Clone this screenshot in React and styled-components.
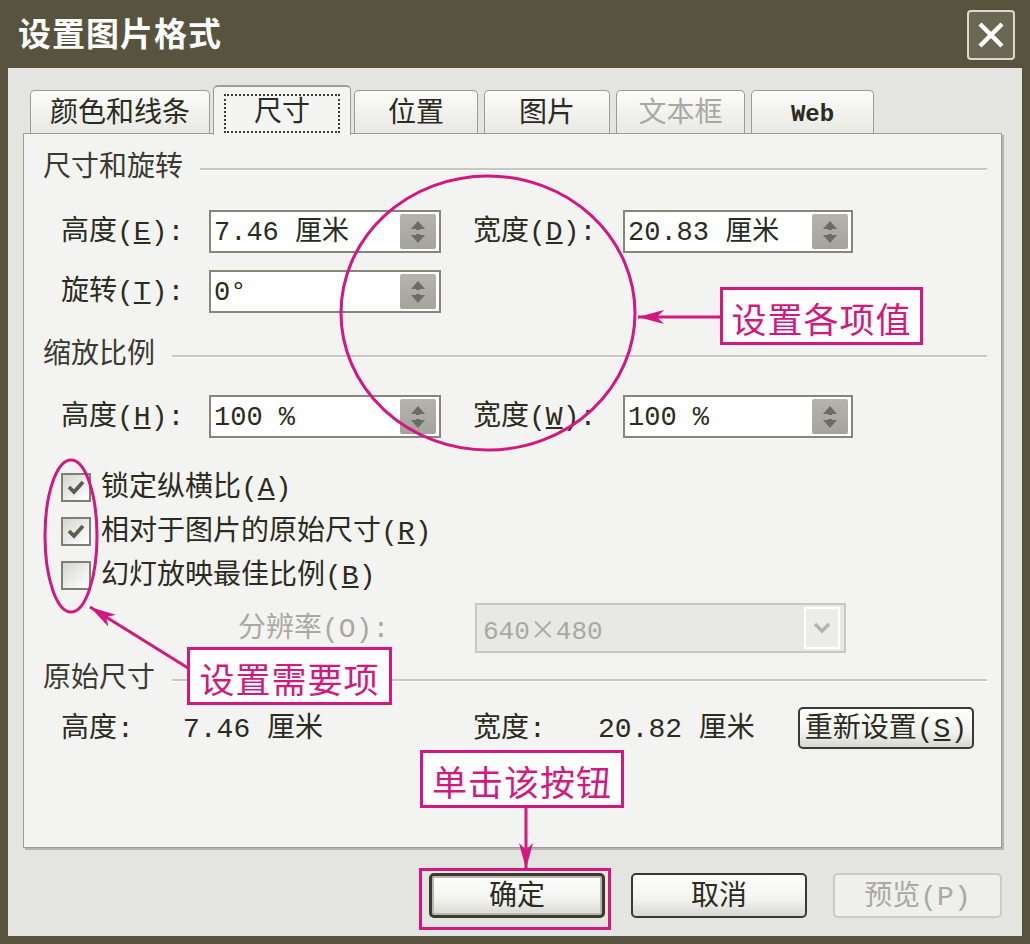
import styled, { createGlobalStyle } from 'styled-components';

const MAGENTA = '#d3187f';
const UI_FONT = `"Liberation Mono", "Noto Sans CJK SC", monospace`;
const CJK_FONT = `"Noto Sans CJK SC", sans-serif`;

const GlobalStyle = createGlobalStyle`
   html, body {
      margin: 0;
      padding: 0;
      background: #57533f;
   }
`;

const Window = styled.div`
   position: relative;
   width: 1030px;
   height: 944px;
   overflow: hidden;
   background: #57533f;
   color: #2b2b22;
   font-family: ${UI_FONT};
`;

const TitleBar = styled.div`
   align-items: center;
   box-sizing: border-box;
   display: flex;
   height: 68px;
   justify-content: space-between;
   padding: 0 15px 0 18px;
`;

const Title = styled.div`
   color: #ffffff;
   font-family: ${CJK_FONT};
   font-size: 33px;
   font-weight: 700;
   letter-spacing: 1px;
   line-height: 1;
   margin-top: -4px;
`;

const CloseButton = styled.div`
   align-items: center;
   background: #6a6755;
   border: 2px solid #d9d9cf;
   border-radius: 4px;
   box-sizing: border-box;
   display: flex;
   height: 50px;
   justify-content: center;
   margin-top: 2px;
   width: 48px;
`;

const Body = styled.div`
   background: #e4e4e0;
   box-sizing: border-box;
   height: 868px;
   margin: 0 8px;
   padding: 17px 0 0 15px;
`;

const TabRow = styled.div`
   align-items: flex-end;
   display: flex;
   gap: 6px;
   height: 48px;
   padding-left: 7px;
   position: relative;
   z-index: 2;
`;

const Tab = styled.div`
   align-items: center;
   background: linear-gradient(#fcfcfa, #e8e8e4);
   border: 1px solid #9c9c94;
   border-bottom: none;
   border-radius: 5px 5px 0 0;
   box-sizing: border-box;
   color: ${p => (p.$disabled ? '#a9a9a1' : '#2b2b22')};
   display: flex;
   font-size: ${p => (p.$latin ? '24px' : '28px')};
   font-weight: ${p => (p.$latin ? 700 : 400)};
   height: 43px;
   justify-content: center;
   line-height: 1;
   padding-top: 5px;
   width: ${p => p.$w}px;
   &[data-active='true'] {
      background: #f4f4f2;
      border-top: 2px solid #a09f96;
      height: 50px;
      margin: 0 -3px -2px;
      padding-top: 4px;
   }
`;

const FocusRect = styled.span`
   border: 2px dotted #3a3a32;
   padding: 4px 28px 3px;
`;

const Panel = styled.div`
   background: #f3f3f1;
   border: 1px solid #9c9c94;
   box-shadow: 2px 2px 0 #b4b4ac;
   box-sizing: border-box;
   height: 715px;
   padding: 17px 14px 0 19px;
   width: 979px;
`;

const Section = styled.div`
   align-items: center;
   box-sizing: border-box;
   color: #3a3a32;
   display: flex;
   font-size: 28px;
   gap: 17px;
   height: 30px;
   line-height: 30px;
   margin-top: ${p => p.$top || 0}px;
   padding-top: 6px;
   &::after {
      border-bottom: 1px solid #ffffff;
      border-top: 2px solid #c8c8c2;
      content: '';
      flex: 1;
   }
`;

const Row = styled.div`
   align-items: center;
   display: flex;
   font-size: 28px;
   height: ${p => p.$h || 43}px;
   line-height: 1;
   margin-top: ${p => p.$top || 0}px;
   padding-left: 18px;
`;

const Label = styled.div`
   color: ${p => (p.$disabled ? '#a9a9a1' : '#2b2b22')};
   flex: none;
   margin-left: ${p => p.$ml || 0}px;
   padding-top: 3px;
   width: ${p => p.$w}px;
   white-space: nowrap;
`;

const Input = styled.div`
   align-items: center;
   background: #ffffff;
   border: 2px solid #86867c;
   box-sizing: border-box;
   display: flex;
   font-size: 27px;
   height: 43px;
   justify-content: space-between;
   padding: 0 3px 0 3px;
   width: ${p => p.$w}px;
   & > span {
      padding-top: 3px;
   }
`;

const Spinner = styled.div`
   align-items: center;
   background: linear-gradient(#b4b4ac, #a4a49c);
   border-radius: 2px;
   display: flex;
   height: 35px;
   justify-content: center;
   width: 36px;
`;

const CheckRow = styled.div`
   align-items: center;
   display: flex;
   font-size: 28px;
   gap: 10px;
   height: 44px;
   line-height: 1;
   margin-top: ${p => p.$top || 0}px;
   padding-left: 18px;
   & > span {
      padding-top: 3px;
   }
`;

const Box = styled.div`
   align-items: center;
   background: linear-gradient(135deg, #d6d6d0, #ffffff);
   border: 2px solid #7e7e76;
   box-sizing: border-box;
   display: flex;
   height: 29px;
   justify-content: center;
   width: 30px;
`;

const Combo = styled.div`
   align-items: center;
   background: #e8e8e4;
   border: 2px solid #c9c9c3;
   box-sizing: border-box;
   color: #a9a9a1;
   display: flex;
   font-size: 26px;
   height: 50px;
   justify-content: space-between;
   padding: 0 4px 0 6px;
   width: 371px;
   & > span {
      padding-top: 3px;
   }
`;

const Times = styled.span`
   font-family: ${CJK_FONT};
`;

const ComboArrow = styled.div`
   align-items: center;
   background: #ececea;
   border: 2px solid #ffffff;
   box-sizing: border-box;
   display: flex;
   height: 42px;
   justify-content: center;
   width: 36px;
`;

const Button = styled.div`
   align-items: center;
   background: ${p =>
      p.$disabled ? '#efefed' : 'linear-gradient(#ffffff, #f2f2ef 60%, #d8d8d2)'};
   border: ${p => (p.$default ? 3 : 2)}px solid
      ${p => (p.$disabled ? '#cbcbc5' : '#3a3a30')};
   border-radius: 5px;
   box-shadow: ${p => (p.$default ? 'inset 0 0 0 2px #b8b8b0' : 'none')};
   box-sizing: border-box;
   color: ${p => (p.$disabled ? '#a9a9a1' : '#2b2b22')};
   display: flex;
   flex: none;
   font-size: 28px;
   height: ${p => p.$h || 45}px;
   justify-content: center;
   line-height: 1;
   padding-top: 4px;
   width: ${p => p.$w}px;
`;

const ButtonRow = styled.div`
   display: flex;
   gap: 26px;
   justify-content: flex-end;
   margin-top: 25px;
   padding-right: 20px;
`;

const Overlay = styled.svg`
   height: 944px;
   left: 0;
   pointer-events: none;
   position: absolute;
   top: 0;
   width: 1030px;
   z-index: 5;
`;

const Callout = styled.div`
   align-items: center;
   background: #ffffff;
   border: 3px solid ${MAGENTA};
   box-sizing: border-box;
   color: ${MAGENTA};
   display: flex;
   font-family: ${CJK_FONT};
   font-size: 35px;
   height: ${p => p.$h}px;
   justify-content: center;
   left: ${p => p.$x}px;
   letter-spacing: 1px;
   line-height: 1;
   padding-top: 3px;
   position: absolute;
   top: ${p => p.$y}px;
   width: ${p => p.$w}px;
   z-index: 6;
`;

const Highlight = styled.div`
   border: 3px solid ${MAGENTA};
   box-sizing: border-box;
   height: ${p => p.$h}px;
   left: ${p => p.$x}px;
   position: absolute;
   top: ${p => p.$y}px;
   width: ${p => p.$w}px;
   z-index: 6;
`;

const tabs = [
   { label: '颜色和线条', w: 180 },
   { label: '尺寸', w: 138, active: true },
   { label: '位置', w: 124 },
   { label: '图片', w: 126 },
   { label: '文本框', w: 129, disabled: true },
   { label: 'Web', w: 123, latin: true },
];

const SpinIcon = () => (
   <svg width='22' height='28' viewBox='0 0 22 28'>
      <path d='M11 3 L18 11 H13 V12 H9 V11 H4 Z' fill='#6c6c62' />
      <path d='M11 25 L18 17 H13 V16 H9 V17 H4 Z' fill='#6c6c62' />
   </svg>
);

const SpinBox = ({ value, w = 232 }) => (
   <Input $w={w}>
      <span>{value}</span>
      <Spinner>
         <SpinIcon />
      </Spinner>
   </Input>
);

const Check = ({ checked }) => (
   <Box>
      {checked && (
         <svg width='20' height='18' viewBox='0 0 20 18'>
            <path
               d='M3 9 L8 14 L17 4'
               fill='none'
               stroke='#5c5c54'
               strokeWidth='3.8'
            />
         </svg>
      )}
   </Box>
);

const App = () => (
   <Window>
      <GlobalStyle />
      <TitleBar>
         <Title>设置图片格式</Title>
         <CloseButton>
            <svg width='30' height='30' viewBox='0 0 30 30'>
               <path
                  d='M4 4 L26 26 M26 4 L4 26'
                  stroke='#ffffff'
                  strokeWidth='4.5'
               />
            </svg>
         </CloseButton>
      </TitleBar>
      <Body>
         <TabRow>
            {tabs.map(t => (
               <Tab
                  key={t.label}
                  $w={t.w}
                  $disabled={t.disabled}
                  $latin={t.latin}
                  data-active={t.active ? 'true' : 'false'}
               >
                  {t.active ? <FocusRect>{t.label}</FocusRect> : t.label}
               </Tab>
            ))}
         </TabRow>
         <Panel>
            <Section>尺寸和旋转</Section>
            <Row $top={29}>
               <Label $w={148}>
                  高度(<u>E</u>):
               </Label>
               <SpinBox value='7.46 厘米' />
               <Label $w={150} $ml={32}>
                  宽度(<u>D</u>):
               </Label>
               <SpinBox value='20.83 厘米' w={230} />
            </Row>
            <Row $top={17}>
               <Label $w={148}>
                  旋转(<u>T</u>):
               </Label>
               <SpinBox value='0°' />
            </Row>
            <Section $top={25}>缩放比例</Section>
            <Row $top={27}>
               <Label $w={148}>
                  高度(<u>H</u>):
               </Label>
               <SpinBox value='100 %' />
               <Label $w={150} $ml={32}>
                  宽度(<u>W</u>):
               </Label>
               <SpinBox value='100 %' w={230} />
            </Row>
            <CheckRow $top={27}>
               <Check checked />
               <span>
                  锁定纵横比(<u>A</u>)
               </span>
            </CheckRow>
            <CheckRow>
               <Check checked />
               <span>
                  相对于图片的原始尺寸(<u>R</u>)
               </span>
            </CheckRow>
            <CheckRow>
               <Check />
               <span>
                  幻灯放映最佳比例(<u>B</u>)
               </span>
            </CheckRow>
            <Row $h={50} $top={6}>
               <Label $w={237} $ml={177} $disabled>
                  分辨率(O):
               </Label>
               <Combo>
                  <span>
                     640<Times>×</Times>480
                  </span>
                  <ComboArrow>
                     <svg width='20' height='14' viewBox='0 0 20 14'>
                        <path
                           d='M3 3 L10 10 L17 3'
                           fill='none'
                           stroke='#b4b4ac'
                           strokeWidth='3.5'
                        />
                     </svg>
                  </ComboArrow>
               </Combo>
            </Row>
            <Section $top={9}>原始尺寸</Section>
            <Row $h={42} $top={15}>
               <Label $w={122}>高度:</Label>
               <Label $w={290}>7.46 厘米</Label>
               <Label $w={125}>宽度:</Label>
               <Label $w={200}>20.82 厘米</Label>
               <Button $w={176} $h={42}>
                  重新设置(<u>S</u>)
               </Button>
            </Row>
         </Panel>
         <ButtonRow>
            <Button $w={176} $default>
               确定
            </Button>
            <Button $w={176}>取消</Button>
            <Button $w={169} $disabled>
               预览(P)
            </Button>
         </ButtonRow>
      </Body>

      <Overlay viewBox='0 0 1030 944'>
         <defs>
            <marker
               id='head'
               markerUnits='userSpaceOnUse'
               markerWidth='26'
               markerHeight='14'
               refX='26'
               refY='7'
               orient='auto'
            >
               <path d='M0 0 L26 7 L0 14 L7 7 Z' fill={MAGENTA} />
            </marker>
         </defs>
         <ellipse
            cx='488'
            cy='313'
            rx='147'
            ry='137'
            fill='none'
            stroke={MAGENTA}
            strokeWidth='3'
         />
         <ellipse
            cx='71'
            cy='536'
            rx='26'
            ry='76'
            fill='none'
            stroke={MAGENTA}
            strokeWidth='3'
         />
         <line
            x1='721'
            y1='317'
            x2='638'
            y2='317'
            stroke={MAGENTA}
            strokeWidth='3'
            markerEnd='url(#head)'
         />
         <line
            x1='188'
            y1='668'
            x2='90'
            y2='607'
            stroke={MAGENTA}
            strokeWidth='3'
            markerEnd='url(#head)'
         />
         <line
            x1='526'
            y1='808'
            x2='526'
            y2='869'
            stroke={MAGENTA}
            strokeWidth='3'
            markerEnd='url(#head)'
         />
      </Overlay>
      <Callout $x={720} $y={287} $w={203} $h={58}>
         设置各项值
      </Callout>
      <Callout $x={187} $y={647} $w={205} $h={58}>
         设置需要项
      </Callout>
      <Callout $x={420} $y={750} $w={204} $h={58}>
         单击该按钮
      </Callout>
      <Highlight $x={419} $y={868} $w={192} $h={62} />
   </Window>
);

export default App;
